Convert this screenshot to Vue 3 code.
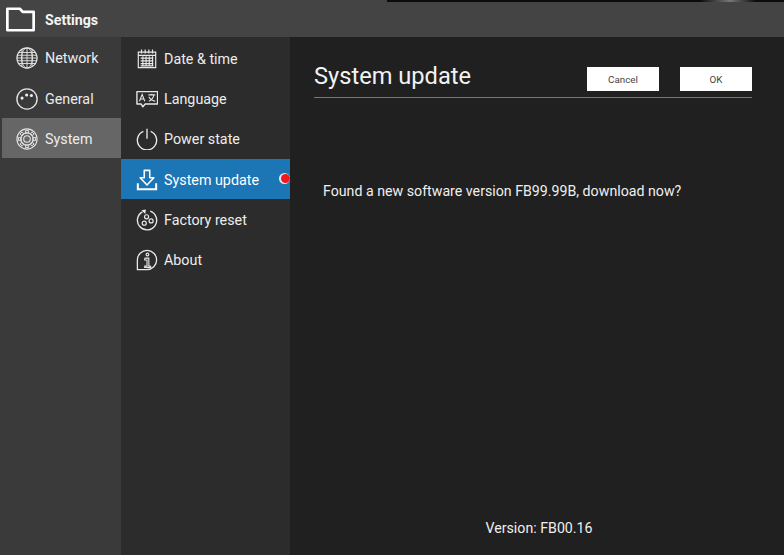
<script setup>
const primary = [
  { label: 'Network', icon: 'network' },
  { label: 'General', icon: 'general' },
  { label: 'System', icon: 'system', active: true },
]
const secondary = [
  { label: 'Date & time', icon: 'date' },
  { label: 'Language', icon: 'language' },
  { label: 'Power state', icon: 'power' },
  { label: 'System update', icon: 'update', active: true, dot: true },
  { label: 'Factory reset', icon: 'reset' },
  { label: 'About', icon: 'about' },
]
const gearTeeth = [0, 45, 90, 135, 180, 225, 270, 315]
</script>

<template>
  <div class="screen">
    <div class="strip"></div>
    <header class="titlebar">
      <svg class="folder" viewBox="0 0 30 25" fill="none" stroke="#fff" stroke-width="2.8" stroke-linejoin="round">
        <path d="M1.400 23.600V1.400h13.100l2.800 3.200h11.300v19z" />
      </svg>
      <span class="title">Settings</span>
    </header>
    <div class="body">
      <nav class="col primary">
        <div v-for="item in primary" :key="item.label" class="row" :class="{ on: item.active }">
          <svg class="icon" viewBox="0 0 24 24" fill="none" stroke="#e4e4e4" stroke-width="1">
            <template v-if="item.icon === 'network'">
              <circle cx="12" cy="12" r="11" stroke-width="1.300" />
              <ellipse cx="12" cy="12" rx="6" ry="11" />
              <path d="M12 1v22M1 12h22M3 6h18M1.600 9h20.800M1.600 15h20.800M3 18h18M6.500 2.500v19M17.500 2.500v19" />
            </template>
            <template v-else-if="item.icon === 'general'">
              <circle cx="12" cy="12" r="11" stroke-width="1.500" />
              <circle cx="6.600" cy="11" r="1.700" fill="#eee" stroke="none" />
              <circle cx="11.600" cy="7.600" r="1.700" fill="#eee" stroke="none" />
              <circle cx="16.800" cy="8.200" r="1.700" fill="#eee" stroke="none" />
            </template>
            <template v-else>
              <circle cx="12" cy="12" r="11" stroke-width="1.200" />
              <circle cx="12" cy="12" r="3.600" stroke-width="1.200" />
              <circle cx="12" cy="12" r="6.800" stroke-width="1.300" />
              <rect v-for="a in gearTeeth" :key="a" x="10.500" y="2.800" width="3" height="2.800" stroke-width="1" :transform="`rotate(${a} 12 12)`" />
            </template>
          </svg>
          <span class="label">{{ item.label }}</span>
        </div>
      </nav>
      <nav class="col secondary">
        <div v-for="item in secondary" :key="item.label" class="row" :class="{ on: item.active }">
          <svg class="icon" viewBox="0 0 24 24" fill="none" stroke="#e8e8e8" stroke-width="1.100">
            <template v-if="item.icon === 'date'">
              <path d="M2.500 4.500h19v17h-19z" stroke-width="1.300" />
              <path d="M6 1.500v4.500M10 1.500v4.500M14 1.500v4.500M18 1.500v4.500" stroke-width="1.300" />
              <path d="M2.500 8h19M5 11h14M5 14h14M5 17h14M5 19.500h14M7.500 9v11M11 9v11M14.500 9v11M18 9v11" stroke-width="1.200" />
            </template>
            <template v-else-if="item.icon === 'language'">
              <path d="M1 4h22.500v13.500H10l-2.500 3-1.800-3H1z" stroke-width="1.500" stroke-linejoin="round" />
              <path d="M3.800 14.500l2.900-7.500 2.900 7.500M4.800 12h3.800" stroke-width="1.200" />
              <path d="M13.500 7.500h7.500M17.200 6.300v1.500M14 14.500c3.300-1.500 5-3.700 5.500-7M14 9.500c1 2.300 3.500 4 7 5" stroke-width="1.100" />
            </template>
            <template v-else-if="item.icon === 'power'">
              <path d="M8 3.700a10.500 10.500 0 1 0 8 0" stroke-width="1.500" />
              <path d="M12 .8v11" stroke-width="1.500" />
            </template>
            <template v-else-if="item.icon === 'update'">
              <path d="M9 1.500h6v8h4.500L12 17.500 4.500 9.500H9z" stroke="#fff" stroke-width="1.700" stroke-linejoin="round" />
              <path d="M2 15.500v6.500h20v-6.500" stroke="#fff" stroke-width="2.200" />
            </template>
            <template v-else-if="item.icon === 'reset'">
              <path d="M7 3.100a10.500 10.500 0 1 0 8.500-.7" stroke-width="1.500" />
              <path d="M6 1.300l4.800-.8-.6 5z" fill="#ececec" stroke="none" />
              <circle cx="11.500" cy="8.500" r="2.200" stroke-width="1.300" />
              <circle cx="16.500" cy="13" r="2.200" stroke-width="1.300" />
              <circle cx="9" cy="15.500" r="2.200" stroke-width="1.300" />
            </template>
            <template v-else>
              <path d="M1.500 22.500V12A10.500 10.500 0 1 1 12 22.500z" stroke-width="1.400" stroke-linejoin="round" />
              <circle cx="12.500" cy="6" r="1.500" stroke-width="1.200" />
              <path d="M9.500 10h4.500v8.500h2M9.500 10v2h2.500v6.500h-2.500v1.500h6.500v-1.500" stroke-width="1.200" />
            </template>
          </svg>
          <span class="label">{{ item.label }}</span>
          <i v-if="item.dot" class="dot"></i>
        </div>
      </nav>
      <main class="content">
        <div class="head">
          <h1>System update</h1>
          <div class="actions">
            <button class="btn">Cancel</button>
            <button class="btn">OK</button>
          </div>
        </div>
        <p class="message">Found a new software version FB99.99B, download now?</p>
        <p class="version">Version: FB00.16</p>
      </main>
    </div>
  </div>
</template>

<style scoped>
.screen {
  width: 784px;
  height: 555px;
  display: flex;
  flex-direction: column;
  overflow: hidden;
  background: #202020;
  font-family: Roboto, "Liberation Sans", sans-serif;
  color: #ececec;
}
.strip {
  height: 2px;
  flex: none;
  background: linear-gradient(90deg, #444 0, #444 387px, #0c0c0c 387px, #0c0c0c 700px, #777 730px, #0c0c0c 756px, #0c0c0c 100%);
}
.titlebar {
  height: 35px;
  flex: none;
  display: flex;
  align-items: center;
  padding-left: 6px;
  gap: 10px;
  background: #444444;
}
.folder { width: 29px; height: 25px; flex: none; }
.title { font-size: 14.200px; font-weight: 700; color: #f4f4f4; padding-top: 1px; }
.body { flex: 1; display: flex; min-height: 0; }
.col { flex: none; display: flex; flex-direction: column; }
.primary { width: 121px; padding-left: 2px; box-sizing: border-box; background: #3a3a3a; }
.secondary { width: 169px; background: #2c2c2c; padding-top: 1px; box-sizing: border-box; }
.row {
  height: 40.300px;
  flex: none;
  display: flex;
  align-items: center;
  gap: 7px;
  padding-left: 14px;
  box-sizing: border-box;
  font-size: 14.300px;
  position: relative;
}
.secondary .row { padding-left: 15px; padding-top: 1px; gap: 6px; }
.primary .row { padding-top: 2px; }
.primary .row:nth-child(2) { padding-top: 3px; }
.primary .row.on { background: #666666; }
.secondary .row.on { background: #1c75b4; color: #fff; }
.icon { width: 22px; height: 22px; flex: none; }
.dot {
  position: absolute;
  right: 0;
  top: 15px;
  width: 9px;
  height: 9px;
  border-radius: 50%;
  background: #f01818;
  box-shadow: -1px 0 0 1px #dfe9f2;
}
.content { flex: 1; display: flex; flex-direction: column; padding: 0 32px 0 24px; min-width: 0; }
.head {
  height: 61px;
  flex: none;
  display: flex;
  align-items: flex-end;
  justify-content: space-between;
  border-bottom: 1px solid #777;
  padding-bottom: 6px;
  box-sizing: border-box;
}
h1 { margin: 0; font-size: 23.650px; font-weight: 400; color: #f2f2f2; line-height: 30px; }
.actions { display: flex; gap: 21px; }
.btn {
  width: 72px;
  height: 24px;
  border: 0;
  padding: 0;
  background: #fff;
  color: #444;
  font-family: inherit;
  font-size: 9.800px;
}
.message { margin: 83.500px 0 0 9px; font-size: 14.200px; line-height: 18px; color: #efefef; }
.version { margin: auto 0 18px; font-size: 14.200px; line-height: 18px; text-align: center; padding-left: 12px; color: #efefef; }
</style>
